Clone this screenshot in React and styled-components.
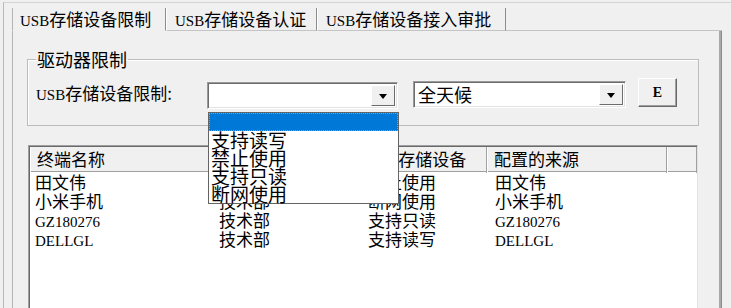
import React from 'react';
import styled, { createGlobalStyle } from 'styled-components';

const GlobalStyle = createGlobalStyle`
  html, body {
    margin: 0;
    padding: 0;
    background: #f0f0f0;
  }
  body {
    font-family: "Noto Sans CJK SC", "Liberation Sans", sans-serif;
    font-size: 17px;
    color: #000;
  }
`;

const Screen = styled.div`
  width: 731px;
  height: 308px;
  overflow: hidden;
  box-sizing: border-box;
  padding: 2px 0 0 3px;
  background: #f0f0f0;
`;

const Frame = styled.div`
  height: 100%;
  box-sizing: border-box;
  border-left: 1px solid #b9b9b9;
  border-top: 1px solid #d4d4d4;
  padding: 5px 0 0 8px;
`;

const TabControl = styled.div`
  width: 710px;
  display: flex;
  flex-direction: column;
`;

const TabBar = styled.div`
  display: flex;
  height: 23px;
`;

const Tab = styled.div`
  width: ${(p) => p.$w}px;
  box-sizing: border-box;
  padding-left: ${(p) => p.$pad}px;
  line-height: 22px;
  white-space: nowrap;
  border-right: 1px solid #8c8c8c;
  border-left: 1px solid ${(p) => (p.$first ? '#b4b4b4' : '#ffffff')};
  border-bottom: 1px solid ${(p) => (p.$active ? 'transparent' : '#c4c4c4')};
`;

const TabFiller = styled.div`
  flex: 1;
  border-bottom: 1px solid #c4c4c4;
`;

const Lat = styled.span`
  font-family: "Liberation Serif", "Times New Roman", serif;
  font-size: 15px;
`;

const Panel = styled.div`
  height: 300px;
  box-sizing: border-box;
  border-left: 1px solid #b4b4b4;
  border-right: 1px solid #8c8c8c;
  box-shadow: inset -2px 0 0 #a8a8a8;
  padding: 19px 0 0 14px;
`;

const GroupBox = styled.fieldset`
  margin: 0;
  width: 672px;
  box-sizing: border-box;
  border: 1px solid #bcbcbc;
  box-shadow: inset 1px 1px 0 #fff;
  padding: 0 8px 16px 8px;
`;

const Legend = styled.legend`
  padding: 0 1px;
  font-size: 18px;
  line-height: 18px;
`;

const FieldRow = styled.div`
  display: flex;
  align-items: center;
  height: 30px;
  margin-top: 11px;
`;

const Label = styled.div`
  width: 171px;
  line-height: 20px;
  white-space: nowrap;
`;

const ComboWrap = styled.div`
  position: relative;
  margin-left: ${(p) => p.$ml || 0}px;
  margin-top: ${(p) => p.$mt || 0}px;
`;

const Combo = styled.div`
  width: ${(p) => p.$w}px;
  height: 27px;
  box-sizing: border-box;
  display: flex;
  align-items: stretch;
  background: #fff;
  border-top: 1px solid #9a9a9a;
  border-left: 1px solid #9a9a9a;
  border-right: 1px solid #ffffff;
  border-bottom: 1px solid #ffffff;
  box-shadow: inset 1px 1px 0 #6c6c6c, inset -1px -1px 0 #e3e3e3;
  padding: 2px;
`;

const ComboText = styled.div`
  flex: 1;
  font-size: 18px;
  line-height: 21px;
  padding-left: 2px;
  white-space: nowrap;
`;

const ComboArrow = styled.div`
  width: 24px;
  display: flex;
  align-items: center;
  justify-content: center;
  background: #f0f0f0;
  box-sizing: border-box;
  border-left: 1px solid #fff;
  border-top: 1px solid #fff;
  border-right: 1px solid #6c6c6c;
  border-bottom: 1px solid #6c6c6c;
  &::after {
    content: '';
    border-left: 4px solid transparent;
    border-right: 4px solid transparent;
    border-top: 5px solid #000;
    margin-top: 1px;
  }
`;

const Button = styled.div`
  margin-left: 12px;
  width: 39px;
  height: 29px;
  margin-top: -3px;
  box-sizing: border-box;
  display: flex;
  align-items: center;
  justify-content: center;
  background: #f0f0f0;
  border-top: 1px solid #fff;
  border-left: 1px solid #fff;
  border-right: 1px solid #696969;
  border-bottom: 1px solid #696969;
  box-shadow: inset -1px -1px 0 #a0a0a0;
  font-family: "Liberation Serif", serif;
  font-weight: bold;
  font-size: 14px;
`;

const DropList = styled.div`
  position: absolute;
  top: 30px;
  left: 1px;
  width: 191px;
  box-sizing: border-box;
  background: #fff;
  border: 1px solid #646464;
  z-index: 5;
`;

const DropItem = styled.div`
  height: 18px;
  padding-left: 2px;
  font-size: 19px;
  line-height: 18px;
  white-space: nowrap;
  background: ${(p) => (p.$sel ? '#0078d7' : 'transparent')};
  outline: ${(p) => (p.$sel ? '1px dotted #6aa8e0' : 'none')};
  outline-offset: -1px;
`;

const ListView = styled.div`
  margin-top: 19px;
  margin-left: 1px;
  width: 670px;
  height: 200px;
  box-sizing: border-box;
  background: #fff;
  border-top: 1px solid #a0a0a0;
  border-left: 1px solid #a0a0a0;
  border-right: 1px solid #e3e3e3;
  box-shadow: inset 1px 1px 0 #696969;
  padding: 1px 0 0 1px;
`;

const COLS = '182px 150px 125px 180px 30px';

const HeaderRow = styled.div`
  display: grid;
  grid-template-columns: ${COLS};
  height: 24px;
  background: #f0f0f0;
  border-bottom: 1px solid #a0a0a0;
`;

const HeadCell = styled.div`
  padding-left: 7px;
  line-height: 23px;
  white-space: nowrap;
  border-right: 1px solid #a0a0a0;
  box-shadow: inset 1px 0 0 #fff;
`;

const Row = styled.div`
  display: grid;
  grid-template-columns: ${COLS};
  height: 19px;
`;

const Cell = styled.div`
  padding-left: ${(p) => p.$pl || 6}px;
  line-height: 19px;
  white-space: nowrap;
`;

const usb = (rest) => (
  <>
    <Lat>USB</Lat>
    {rest}
  </>
);

const tabs = [
  { label: usb('存储设备限制'), w: 154, pad: 7, active: true },
  { label: usb('存储设备认证'), w: 151, pad: 8 },
  { label: usb('存储设备接入审批'), w: 189, pad: 8 },
];

const options = ['', '支持读写', '禁止使用', '支持只读', '断网使用'];

const rows = [
  ['田文伟', '技术部', '禁止使用', '田文伟'],
  ['小米手机', '技术部', '断网使用', '小米手机'],
  [<Lat key="a">GZ180276</Lat>, '技术部', '支持只读', <Lat key="b">GZ180276</Lat>],
  [<Lat key="a">DELLGL</Lat>, '技术部', '支持读写', <Lat key="b">DELLGL</Lat>],
];

export default function App() {
  return (
    <Screen>
      <GlobalStyle />
      <Frame>
        <TabControl>
          <TabBar>
            {tabs.map((t, i) => (
              <Tab key={i} $w={t.w} $pad={t.pad} $active={t.active} $first={i === 0}>
                {t.label}
              </Tab>
            ))}
            <TabFiller />
          </TabBar>
          <Panel>
            <GroupBox>
              <Legend>驱动器限制</Legend>
              <FieldRow>
                <Label>{usb('存储设备限制:')}</Label>
                <ComboWrap $mt={3}>
                  <Combo $w={191}>
                    <ComboText />
                    <ComboArrow />
                  </Combo>
                  <DropList>
                    {options.map((o, i) => (
                      <DropItem key={i} $sel={i === 0}>
                        {o}
                      </DropItem>
                    ))}
                  </DropList>
                </ComboWrap>
                <ComboWrap $ml={15} $mt={1}>
                  <Combo $w={213}>
                    <ComboText>全天候</ComboText>
                    <ComboArrow />
                  </Combo>
                </ComboWrap>
                <Button>E</Button>
              </FieldRow>
            </GroupBox>
            <ListView>
              <HeaderRow>
                <HeadCell>终端名称</HeadCell>
                <HeadCell>所属部门</HeadCell>
                <HeadCell>{usb('存储设备')}</HeadCell>
                <HeadCell>配置的来源</HeadCell>
                <HeadCell />
              </HeaderRow>
              {rows.map((r, i) => (
                <Row key={i}>
                  <Cell $pl={5}>{r[0]}</Cell>
                  <Cell $pl={7}>{r[1]}</Cell>
                  <Cell $pl={6}>{r[2]}</Cell>
                  <Cell $pl={8}>{r[3]}</Cell>
                  <Cell />
                </Row>
              ))}
            </ListView>
          </Panel>
        </TabControl>
      </Frame>
    </Screen>
  );
}
